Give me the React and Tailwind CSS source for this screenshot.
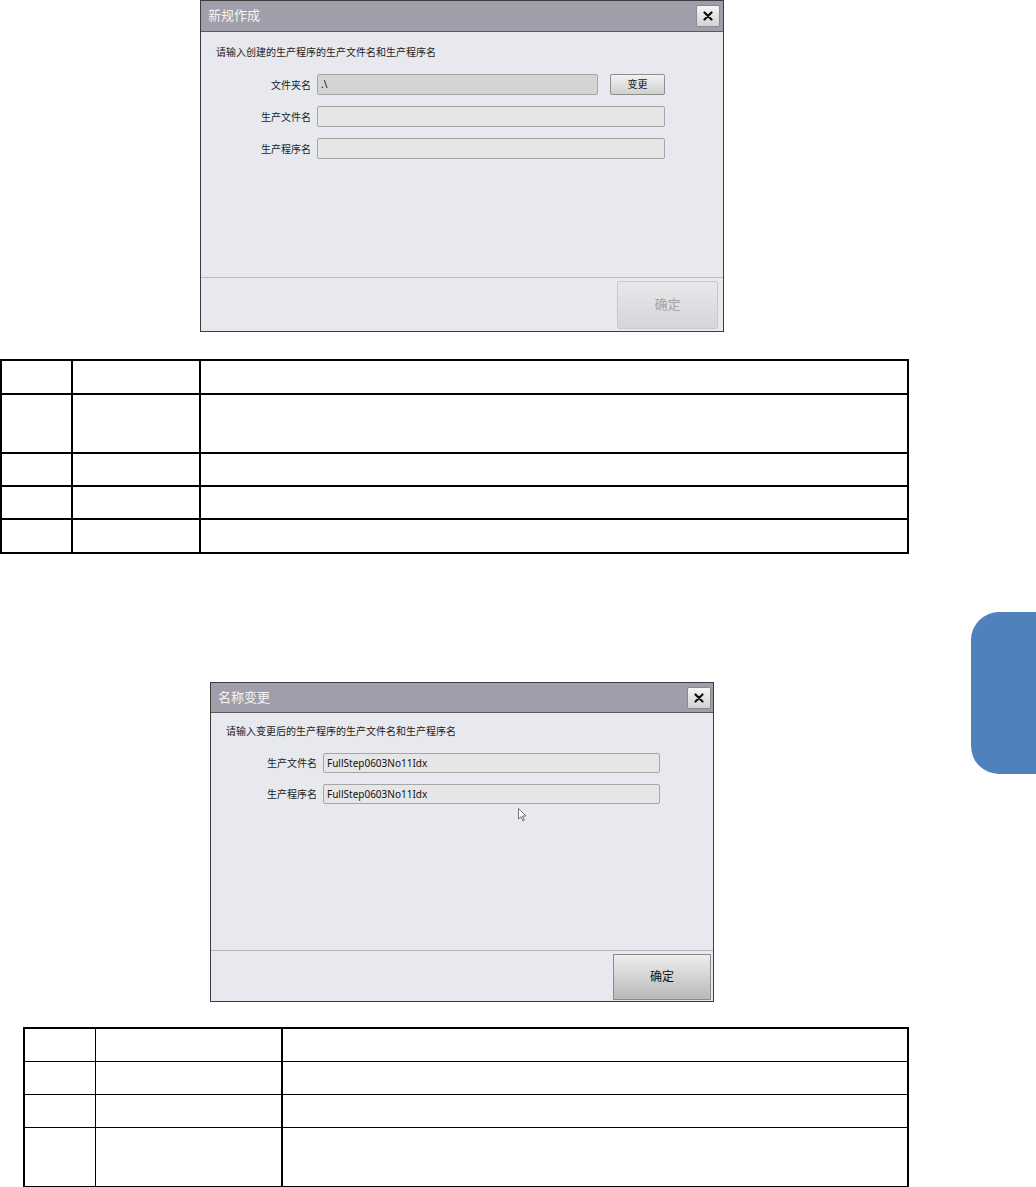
import React from 'react';

const cjk = "font-['Noto_Sans','Noto_Sans_CJK_SC',sans-serif]";

function CloseButton() {
  return (
    <button
      type="button"
      className="flex h-[22px] w-[24px] items-center justify-center rounded-[2px] border border-[#8a8a8a] bg-gradient-to-b from-[#f6f6f6] to-[#d2d2d2]"
    >
      <svg width="10" height="10" viewBox="0 0 10 10">
        <path d="M1.5 1.5 L8.5 8.5 M8.5 1.5 L1.5 8.5" stroke="#111" strokeWidth="2.2" strokeLinecap="round" />
      </svg>
    </button>
  );
}

function Field({ label, value, labelW, inputW, disabled, h = 'h-[21px]' }) {
  return (
    <div className="flex items-center">
      <div className={`${labelW} pr-[6px] text-right text-[10px] leading-none text-[#222]`}>{label}</div>
      <div
        className={`${inputW} ${h} flex items-center rounded-[2px] border border-[#a6a6a6] px-[3px] text-[10px] text-[#111] ${
          disabled ? 'bg-[#d4d4d4]' : 'bg-[#e6e6e6]'
        }`}
      >
        {value}
      </div>
    </div>
  );
}

function NewDialog() {
  return (
    <div className={`ml-[200px] flex h-[332px] w-[524px] flex-col border border-[#3c3c3c] bg-[#e8e9ee] ${cjk}`}>
      {/* title bar */}
      <div className="flex h-[31px] items-center justify-between border-b border-[#5a5a5a] bg-[#a19eab] pl-[7px] pr-[3px]">
        <span className="text-[13px] text-[#f4f4f4]">新规作成</span>
        <CloseButton />
      </div>

      <div className="flex-1">
        <div className="mt-[14px] pl-[15px] text-[10px] leading-[12px] text-[#222]">
          请输入创建的生产程序的生产文件名和生产程序名
        </div>
        <div className="mt-[16px] flex flex-col gap-[11px]">
          <div className="flex items-center">
            <Field label="文件夹名" value=".\" labelW="w-[116px]" inputW="w-[281px]" disabled />
            <button
              type="button"
              className="ml-[12px] h-[21px] w-[55px] rounded-[2px] border border-[#8e8e8e] bg-gradient-to-b from-[#f2f2f2] to-[#d0d0d0] text-[10px] text-[#222]"
            >
              变更
            </button>
          </div>
          <Field label="生产文件名" value="" labelW="w-[116px]" inputW="w-[348px]" />
          <Field label="生产程序名" value="" labelW="w-[116px]" inputW="w-[348px]" />
        </div>
      </div>

      {/* footer */}
      <div className="flex h-[54px] justify-end border-t border-[#bcbcbc] pr-[5px] pt-[3px]">
        <button
          type="button"
          className="h-[48px] w-[101px] rounded-[2px] border border-[#c9c9c9] bg-gradient-to-b from-[#e8e8eb] to-[#d6d6da] text-[13px] text-[#a2a2a2]"
        >
          确定
        </button>
      </div>
    </div>
  );
}

function RenameDialog() {
  return (
    <div className={`relative ml-[210px] flex h-[320px] w-[504px] flex-col border border-[#3c3c3c] bg-[#e8e9ee] ${cjk}`}>
      <div className="flex h-[30px] items-center justify-between border-b border-[#5a5a5a] bg-[#a19eab] pl-[7px] pr-[2px]">
        <span className="text-[13px] text-[#f4f4f4]">名称变更</span>
        <CloseButton />
      </div>

      <div className="flex-1">
        <div className="mt-[12px] pl-[15px] text-[10px] leading-[12px] text-[#222]">
          请输入变更后的生产程序的生产文件名和生产程序名
        </div>
        <div className="mt-[16px] flex flex-col gap-[11px]">
          <Field label="生产文件名" value="FullStep0603No11Idx" labelW="w-[112px]" inputW="w-[337px]" h="h-[20px]" />
          <Field label="生产程序名" value="FullStep0603No11Idx" labelW="w-[112px]" inputW="w-[337px]" h="h-[20px]" />
        </div>
      </div>

      <div className="flex h-[51px] justify-end border-t border-[#b4b4b4] pr-[2px] pt-[3px]">
        <button
          type="button"
          className="h-[46px] w-[98px] border border-[#8a8a8a] bg-gradient-to-b from-[#eeeeee] to-[#b9b9b9] text-[12px] text-[#111]"
        >
          确定
        </button>
      </div>

      {/* mouse pointer */}
      <svg className="absolute left-[307px] top-[125px]" width="9" height="14" viewBox="0 0 9 14">
        <path d="M0.5 0.5 L0.5 11 L3 8.6 L4.8 12.8 L6.3 12.1 L4.5 8 L8 8 Z" fill="#fff" stroke="#555" strokeWidth="0.8" />
      </svg>
    </div>
  );
}

function FirstTable() {
  const rows = ['h-[34px]', 'h-[59px]', 'h-[33px]', 'h-[33px]', 'h-[34px]'];
  return (
    <table className="mt-[27px] w-[909px] border-collapse border-2 border-black">
      <tbody>
        {rows.map((h, i) => (
          <tr key={i} className={h}>
            <td className="w-[71px] border-2 border-black"></td>
            <td className="w-[128px] border-2 border-black"></td>
            <td className="border-2 border-black"></td>
          </tr>
        ))}
      </tbody>
    </table>
  );
}

function SecondTable() {
  const rows = ['h-[33px]', 'h-[33px]', 'h-[33px]', 'h-[60px]'];
  return (
    <table className="ml-[23px] mt-[25px] w-[886px] border-collapse border-2 border-black">
      <tbody>
        {rows.map((h, i) => (
          <tr key={i} className={h}>
            <td className="w-[71px] border border-black"></td>
            <td className="w-[187px] border border-r-2 border-black"></td>
            <td className="border border-black"></td>
          </tr>
        ))}
      </tbody>
    </table>
  );
}

export default function App() {
  return (
    <div className="flex h-[1187px] w-[1036px] overflow-hidden bg-white">
      <div className="w-[971px] shrink-0">
        <NewDialog />
        <FirstTable />
        <div className="h-[128px]" />
        <RenameDialog />
        <SecondTable />
      </div>
      {/* chapter tab */}
      <div className="pt-[612px]">
        <div className="h-[162px] w-[65px] rounded-l-[28px] bg-[#4f81bd]" />
      </div>
    </div>
  );
}
